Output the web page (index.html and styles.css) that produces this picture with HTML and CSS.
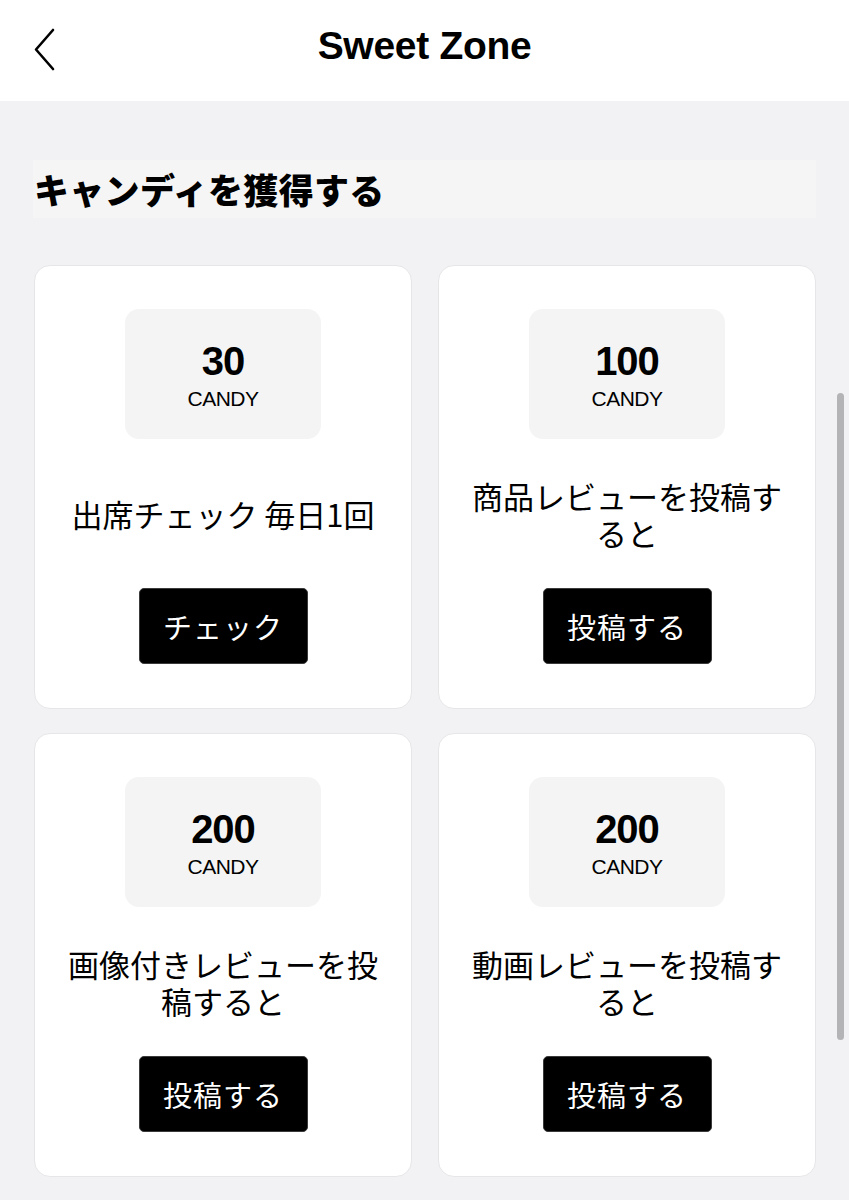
FILE: index.html
```html
<!DOCTYPE html>
<html lang="ja">
<head>
<meta charset="utf-8">
<title>Sweet Zone</title>
<link rel="stylesheet" href="styles.css">
</head>
<body>
<div class="topbar">
	<a class="back" href="#">
		<svg width="24" height="44" viewBox="0 0 24 44"><polyline points="20,2 3,21.5 20,41" fill="none" stroke="#000" stroke-width="2.6" stroke-linecap="round" stroke-linejoin="round"/></svg>
	</a>
	<h1 class="title">Sweet Zone</h1>
	<span></span>
</div>

<div class="main">
	<div class="sec-title">キャンディを獲得する</div>

	<ul class="cards">
		<li class="card">
			<div class="candy"><b>30</b><span>CANDY</span></div>
			<p class="desc">出席チェック 毎日1回</p>
			<a class="btn" href="#">チェック</a>
		</li>
		<li class="card">
			<div class="candy"><b>100</b><span>CANDY</span></div>
			<p class="desc">商品レビューを投稿すると</p>
			<a class="btn" href="#">投稿する</a>
		</li>
		<li class="card">
			<div class="candy"><b>200</b><span>CANDY</span></div>
			<p class="desc">画像付きレビューを投稿すると</p>
			<a class="btn" href="#">投稿する</a>
		</li>
		<li class="card">
			<div class="candy"><b>200</b><span>CANDY</span></div>
			<p class="desc">動画レビューを投稿すると</p>
			<a class="btn" href="#">投稿する</a>
		</li>
	</ul>
</div>

<!-- スクロールバー -->
<div class="scrollbar"></div>
</body>
</html>
```

FILE: styles.css
```css
*{ margin:0; padding:0; box-sizing:border-box;}
html, body{ overflow:hidden;}
body{ background:#f2f2f4; color:#000; font-family:"Noto Sans CJK JP","Noto Sans",sans-serif;}
li{ list-style:none;}
a{ text-decoration:none;}

.topbar{ height:101px; background:#fff; display:grid; grid-template-columns:1fr auto 1fr; align-items:center;}
.back{ display:flex; padding-left:33px; padding-bottom:2px;}
.title{ font:bold 39px/1 "Liberation Sans",Arial,sans-serif; letter-spacing:-0.3px; padding-bottom:10px;}

.main{ padding:59px 33px 0 33px;}
.sec-title{ height:58px; background:#f5f5f6; font-size:35px; font-weight:900; line-height:58px; padding-left:1px; letter-spacing:0.3px;}

.cards{ display:grid; grid-template-columns:1fr 1fr; gap:24px 26px; margin-top:47px; padding-left:1px;}
.card{ background:#fff; border:1px solid #e6e6e8; border-radius:16px; padding:43px 22px 44px; display:flex; flex-direction:column; align-items:center;}
.candy{ width:196px; height:130px; background:#f4f4f5; border-radius:14px; display:flex; flex-direction:column; align-items:center; padding-top:30px; font-family:"Liberation Sans",Arial,sans-serif;}
.candy b{ font-size:40px; line-height:44px; letter-spacing:-1px;}
.candy span{ font-size:21px; line-height:24px; margin-top:4px; letter-spacing:-0.5px;}
.desc{ min-height:149px; display:flex; align-items:center; justify-content:center; text-align:center; font-size:31px; line-height:37px; width:100%;}
.btn{ width:169px; height:76px; background:#000; border:1px solid #3a3a3a; border-radius:5px; color:#fff; font-size:29px; letter-spacing:1px; display:flex; align-items:center; justify-content:center;}

.scrollbar{ position:fixed; right:5px; top:393px; width:7px; height:647px; border-radius:4px; background:#b4b4b6;}
```
